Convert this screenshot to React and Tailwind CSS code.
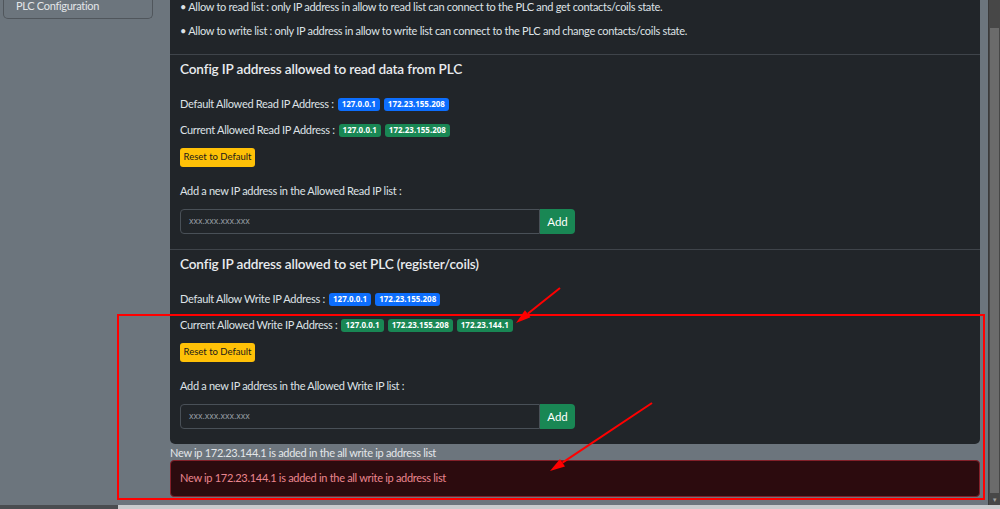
import React from 'react'

const font = { fontFamily: 'Lato, "Noto Sans", sans-serif' }

function Badge({ color, children }) {
  const bg = color === 'blue' ? 'bg-[#0d6efd]' : 'bg-[#198754]'
  return (
    <span
      className={`${bg} inline-flex h-[13px] items-center rounded-[3px] px-[4px] text-[8px] font-bold leading-none tracking-normal text-white`}
      style={{ fontFamily: '"Noto Sans", sans-serif' }}
    >
      {children}
    </span>
  )
}

function IpLine({ label, color, ips, className = '' }) {
  return (
    <div className={`flex h-[16px] items-center gap-[4px] text-[11px] leading-[16px] ${className}`}>
      <span>{label}</span>
      {ips.map((ip) => (
        <Badge key={ip} color={color}>{ip}</Badge>
      ))}
    </div>
  )
}

function IpSection({ title, defaultLabel, currentLabel, addLabel, currentIps }) {
  return (
    <div className="border-t border-[#3f444a] px-[10px] pt-[5px] pb-[15px]">
      <h5 className="h-[18px] text-[13.6px] font-semibold leading-[18px] tracking-[-0.15px] text-[#e9ecef]">{title}</h5>
      <IpLine className="mt-[18px]" label={defaultLabel} color="blue" ips={['127.0.0.1', '172.23.155.208']} />
      <IpLine className="mt-[10px]" label={currentLabel} color="green" ips={currentIps} />
      <button className="mt-[10px] flex h-[19px] w-[75px] items-center justify-center rounded-[3px] bg-[#ffc107] text-[9.5px] tracking-normal text-[#1a1a1a]">
        Reset to Default
      </button>
      <div className="mt-[16px] h-[16px] text-[11px] leading-[16px]">{addLabel}</div>
      <div className="mt-[10px] flex h-[25px] w-[395px]">
        <div
          className="flex flex-1 items-center rounded-l-[4px] border border-[#495057] bg-[#212529] pl-[8px] text-[8.5px] tracking-normal text-[#9aa0a6]"
          style={{ fontFamily: '"Noto Sans", sans-serif' }}
        >
          xxx.xxx.xxx.xxx
        </div>
        <button className="flex w-[35px] items-center justify-center rounded-r-[4px] bg-[#198754] text-[11.5px] tracking-normal text-white">
          Add
        </button>
      </div>
    </div>
  )
}

function Arrow({ x1, y1, x2, y2 }) {
  const dx = x2 - x1
  const dy = y2 - y1
  const len = Math.hypot(dx, dy)
  const ux = dx / len
  const uy = dy / len
  const hl = 15
  const hw = 4.5
  const bx = x2 - ux * hl
  const by = y2 - uy * hl
  const pts = `${x2},${y2} ${bx - uy * hw},${by + ux * hw} ${bx + uy * hw},${by - ux * hw}`
  return (
    <g>
      <line x1={x1} y1={y1} x2={bx} y2={by} stroke="#ff0000" strokeWidth="2" />
      <polygon points={pts} fill="#ff0000" />
    </g>
  )
}

export default function App() {
  return (
    <div className="relative h-[509px] w-[1000px] overflow-hidden bg-[#6c757d] tracking-[-0.3px] text-[#dee2e6]" style={font}>
      <div className="flex h-[505px]">
        <div className="w-[170px] shrink-0 pl-[3px]">
          <div className="flex h-[19px] w-[150px] items-center rounded-b-[5px] border-x border-b border-[#50565c] bg-[#6c757d] pb-[5px] pl-[12px] text-[11px] text-[#e3e6e9]">
            PLC Configuration
          </div>
        </div>

        <div className="w-[810px] shrink-0">
          <div className="rounded-b-[5px] bg-[#212529]">
            <div className="px-[10px] pb-[15px]">
              <p className="mt-[-1px] h-[16px] text-[11px] leading-[16px]">
                • Allow to read list : only IP address in allow to read list can connect to the PLC and get contacts/coils state.
              </p>
              <p className="mt-[8px] h-[16px] text-[11px] leading-[16px]">
                • Allow to write list : only IP address in allow to write list can connect to the PLC and change contacts/coils state.
              </p>
            </div>
            <IpSection
              title="Config IP address allowed to read data from PLC"
              defaultLabel="Default Allowed Read IP Address :"
              currentLabel="Current Allowed Read IP Address :"
              addLabel="Add a new IP address in the Allowed Read IP list :"
              currentIps={['127.0.0.1', '172.23.155.208']}
            />
            <IpSection
              title="Config IP address allowed to set PLC (register/coils)"
              defaultLabel="Default Allow Write IP Address :"
              currentLabel="Current Allowed Write IP Address :"
              addLabel="Add a new IP address in the Allowed Write IP list :"
              currentIps={['127.0.0.1', '172.23.155.208', '172.23.144.1']}
            />
          </div>
          <div className="mt-[2px] h-[14px] text-[11px] leading-[14px] text-[#e3e6e9]">
            New ip 172.23.144.1 is added in the all write ip address list
          </div>
          <div className="flex h-[37px] items-center rounded-[4px] border border-[#842029] bg-[#2c0b0e] pl-[9px] text-[11px] text-[#ea868f]">
            New ip 172.23.144.1 is added in the all write ip address list
          </div>
        </div>

        <div className="w-[8px] shrink-0" />

        <div className="flex w-[12px] shrink-0 flex-col border-l border-[#3a3a3a] bg-[#474747]">
          <div className="h-[28px]" />
          <div className="mx-[1px] flex-1 bg-[#6b6b6b]" />
          <div className="flex h-[12px] items-center justify-center text-[6px] text-[#a0a0a0]">▼</div>
        </div>
      </div>
      <div className="flex h-[4px]">
        <div className="w-[118px] bg-[#4a4d50]" />
        <div className="flex-1 bg-[#c9cbcd]" />
      </div>

      <div className="absolute left-[117px] top-[314px] h-[186px] w-[868px] border-[2.5px] border-[#ff0000]" />
      <svg className="pointer-events-none absolute left-0 top-0" width="1000" height="509">
        <Arrow x1={560} y1={288} x2={516} y2={323} />
        <Arrow x1={652} y1={403} x2={550} y2={471} />
      </svg>
    </div>
  )
}
